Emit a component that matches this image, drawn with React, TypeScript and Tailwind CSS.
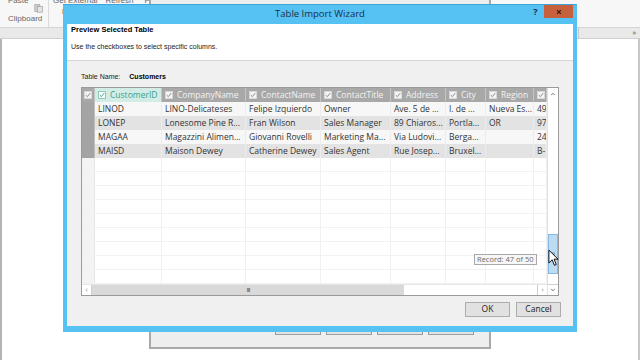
import React from 'react';

const columns = [
  { name: 'CustomerID', w: 'w-[67px]', selected: true },
  { name: 'CompanyName', w: 'w-[84px]' },
  { name: 'ContactName', w: 'w-[75px]' },
  { name: 'ContactTitle', w: 'w-[70px]' },
  { name: 'Address', w: 'w-[55px]' },
  { name: 'City', w: 'w-[40px]' },
  { name: 'Region', w: 'w-[48px]' },
  { name: 'PostalCode', w: 'w-[13px]' },
];

const rows = [
  ['LINOD', 'LINO-Delicateses', 'Felipe Izquierdo', 'Owner', 'Ave. 5 de ...', 'I. de ...', 'Nueva Es...', '4980'],
  ['LONEP', 'Lonesome Pine R...', 'Fran Wilson', 'Sales Manager', '89 Chiaros...', 'Portla...', 'OR', '97219'],
  ['MAGAA', 'Magazzini Alimen...', 'Giovanni Rovelli', 'Marketing Ma...', 'Via Ludovi...', 'Berga...', '', '24100'],
  ['MAISD', 'Maison Dewey', 'Catherine Dewey', 'Sales Agent', 'Rue Josep...', 'Bruxel...', '', 'B-1180'],
];

const Check = ({ teal }: { teal?: boolean }) => (
  <span
    className={`inline-flex h-[8px] w-[8px] shrink-0 items-center justify-center border ${
      teal ? 'border-[#8fc9bb] bg-white' : 'border-[#d8d8d8] bg-[#f4f4f4]'
    }`}
  >
    <svg viewBox="0 0 8 8" className="h-[6px] w-[6px]">
      <path d="M1 4.2 L3.1 6.2 L7 1.5" fill="none" stroke={teal ? '#3a9d88' : '#8a8a8a'} strokeWidth="1.3" />
    </svg>
  </span>
);

const DataGrid = () => (
  <div className="flex h-[209px] w-[478px] border border-[#9a9a9a] bg-white">
    <div className="flex w-[466px] flex-col">
      {/* header */}
      <div className="flex h-[14px] bg-[#a8a8a8]">
        <div className="flex w-[13px] items-center justify-center border-r border-[#c4c4c4]">
          <Check />
        </div>
        {columns.map((c) => (
          <div
            key={c.name}
            className={`flex ${c.w} shrink-0 items-center gap-[4px] overflow-hidden whitespace-nowrap border-r border-[#c4c4c4] pl-[3px] text-[8.5px] ${
              c.selected ? 'bg-[#d3ede6] text-[#3b9f8a]' : 'text-[#f3f3f3]'
            }`}
          >
            <Check teal={c.selected} />
            <span>{c.name}</span>
          </div>
        ))}
      </div>
      {/* data rows */}
      <div className="flex flex-1 flex-col overflow-hidden">
        {rows.map((r, i) => (
          <div key={i} className={`flex h-[14px] shrink-0 ${i % 2 ? 'bg-[#e3e3e3]' : 'bg-[#f7f7f7]'}`}>
            <div className="w-[13px] shrink-0 border-r border-[#c0c0c0] bg-[#a4a4a4]" />
            {r.map((cell, j) => (
              <div
                key={j}
                className={`${columns[j].w} shrink-0 overflow-hidden whitespace-nowrap border-r border-[#ececec] pl-[3px] text-[8.5px] leading-[14px] text-[#333]`}
              >
                {cell}
              </div>
            ))}
          </div>
        ))}
        {Array.from({ length: 10 }).map((_, i) => (
          <div key={'e' + i} className="flex h-[14px] shrink-0 border-b border-[#f2f2f2]">
            <div className="w-[13px] shrink-0 border-r border-[#e4e4e4] bg-[#f3f3f3]" />
            {columns.map((c) => (
              <div key={c.name} className={`${c.w} shrink-0 border-r border-[#f0f0f0]`} />
            ))}
          </div>
        ))}
      </div>
      {/* horizontal scrollbar */}
      <div className="flex h-[11px] shrink-0 items-stretch border-t border-[#e6e6e6] bg-white">
        <div className="flex w-[10px] items-center justify-center border-r border-[#cfcfcf] text-[7px] text-[#777]">‹</div>
        <div className="flex w-[312px] items-center justify-center bg-[#d9d9d9]">
          <span className="text-[6px] font-bold leading-none tracking-[-1px] text-[#777]">III</span>
        </div>
        <div className="flex-1" />
        <div className="flex w-[10px] items-center justify-center border-l border-[#cfcfcf] text-[7px] text-[#777]">›</div>
      </div>
    </div>
    {/* vertical scrollbar */}
    <div className="relative flex w-[11px] flex-col border-l border-[#e0e0e0] bg-white">
      <div className="flex h-[11px] items-center justify-center text-[7px] text-[#555]">
        <svg viewBox="0 0 8 8" className="h-[6px] w-[6px]">
          <path d="M1.5 5.5 L4 3 L6.5 5.5" fill="none" stroke="#555" strokeWidth="1.1" />
        </svg>
      </div>
      <div className="flex flex-1 flex-col pt-[135px]">
        <div className="flex h-[40px] items-center justify-center border border-[#86b9e4] bg-[#bcdcf4]">
          <svg viewBox="0 0 8 8" className="h-[6px] w-[6px]">
            <path d="M1.5 2.5 H6.5 M1.5 4 H6.5 M1.5 5.5 H6.5" stroke="#3d6f9b" strokeWidth="0.8" />
          </svg>
        </div>
      </div>
      <div className="flex h-[11px] items-center justify-center border-t border-[#cfcfcf]">
        <svg viewBox="0 0 8 8" className="h-[6px] w-[6px]">
          <path d="M1.5 2.5 L4 5 L6.5 2.5" fill="none" stroke="#555" strokeWidth="1.1" />
        </svg>
      </div>
    </div>
  </div>
);

const Dialog = () => (
  <div className="absolute left-[63px] top-[4px] flex h-[328px] w-[514px] flex-col border-t border-[#3aa6dc] bg-[#56c1f3] px-[4px] pb-[6px]">
    <div className="relative flex h-[19px] shrink-0 items-center justify-center">
      <span className="text-[9.5px] text-[#1c2f45]">Table Import Wizard</span>
      <div className="absolute right-[0px] top-[0px] flex h-[13px]">
        <div className="flex w-[17px] items-center justify-center text-[9px] font-bold text-[#1c2f45]">?</div>
        <div className="flex w-[29px] items-center justify-center bg-[#c7603c] text-[9px] font-bold text-[#3a1a10]">
          <svg viewBox="0 0 8 8" className="h-[6px] w-[6px]">
            <path d="M1.5 1.5 L6.5 6.5 M6.5 1.5 L1.5 6.5" stroke="#3a1a10" strokeWidth="1.5" />
          </svg>
        </div>
      </div>
    </div>
    <div className="flex flex-1 flex-col bg-[#f0f0f0]">
      <div className="flex h-[37px] shrink-0 flex-col border-b border-[#d4d4d4] bg-white pl-[4px] pt-[1px] font-['Liberation_Sans',sans-serif] leading-[10px]">
        <span className="text-[7.5px] font-bold text-black">Preview Selected Table</span>
        <span className="mt-[7px] text-[7px] text-[#222]">Use the checkboxes to select specific columns.</span>
      </div>
      <div className="flex flex-1 flex-col pl-[14px] pr-[12px]">
        <div className="flex h-[26px] items-end gap-[9px] pb-[5px] font-['Liberation_Sans',sans-serif] text-[7px] text-[#222]">
          <span>Table Name:</span>
          <span className="font-bold text-black">Customers</span>
        </div>
        <DataGrid />
        <div className="mt-[6px] flex justify-end gap-[6px]">
          <button className="h-[15px] w-[45px] border border-[#adadad] bg-[#e1e1e1] text-[8.5px] text-[#222]">OK</button>
          <button className="h-[15px] w-[45px] border border-[#adadad] bg-[#e1e1e1] text-[8.5px] text-[#222]">Cancel</button>
        </div>
      </div>
    </div>
    {/* tooltip */}
    <div className="absolute left-[411px] top-[249px] border border-[#a8a8a8] bg-[#f7f7f7] px-[2px] text-[7.5px] leading-[9px] text-[#6a6a6a]">
      Record: 47 of 50
    </div>
    {/* mouse cursor */}
    <svg viewBox="0 0 12 19" className="absolute left-[485px] top-[244px] h-[18px] w-[11px]">
      <path d="M1 1 L1 15 L4.5 11.5 L7 17.5 L9 16.6 L6.6 10.8 L11 10.8 Z" fill="white" stroke="black" strokeWidth="1" strokeLinejoin="round" />
    </svg>
  </div>
);

const BackWindow = () => (
  <div className="absolute left-[149px] top-[-4px] flex h-[353px] w-[342px] flex-col justify-end border-x-2 border-b-2 border-t border-[#a9a9a9] bg-[#eeeeee] pb-[12px] pr-[15px]">
    <div className="flex justify-end gap-[5px]">
      {[0, 1, 2, 3].map((i) => (
        <div key={i} className="h-[20px] w-[46px] border border-[#9c9c9c] bg-[#e3e3e3]" />
      ))}
    </div>
  </div>
);

export default function App() {
  return (
    <div className="relative h-[360px] w-[640px] overflow-hidden bg-white font-['Open_Sans','Noto_Sans',sans-serif]">
      {/* ribbon */}
      <div className="flex h-[28px] border-b border-[#d5d5d5] bg-[#f7f7f7] font-['Liberation_Sans',sans-serif] text-[8px] text-[#666]">
        <div className="flex w-[49px] flex-col border-r border-[#dadada] pl-[8px]">
          <div className="mt-[-5px] flex items-start gap-[6px]">
            <span>Paste</span>
            <svg viewBox="0 0 12 12" className="mt-[8px] h-[10px] w-[10px]">
              <rect x="1" y="2" width="6" height="8" fill="#cfcfcf" stroke="#9a9a9a" strokeWidth="0.8" />
              <rect x="4" y="4" width="6" height="7" fill="#e6e6e6" stroke="#9a9a9a" strokeWidth="0.8" />
            </svg>
          </div>
          <span className="mt-[0px] text-[8px]">Clipboard</span>
        </div>
        <div className="flex flex-col pl-[4px]">
          <div className="mt-[-5px] flex gap-[8px]">
            <span>Get External</span>
            <span>Refresh</span>
            <span className="pl-[3px]">PivotTable</span>
          </div>
          <span className="pl-[9px] leading-[9px] text-[#444]">Data</span>
        </div>
      </div>
      <div className="flex h-[11px] border-b border-[#cfcfcf] bg-[#e9e9e9] pl-[3px]">
        <div className="flex-1" />
        <div className="flex w-[62px] items-center justify-end border-l border-[#c9c9c9] pr-[4px] text-[7px] text-[#444]">»</div>
      </div>
      <div className="flex h-[321px]">
        <div className="w-[2px] bg-[#b4b4b4]" />
        <div className="flex-1" />
        <div className="w-[2px] bg-[#c8c8c8]" />
      </div>
      <BackWindow />
      <Dialog />
    </div>
  );
}
